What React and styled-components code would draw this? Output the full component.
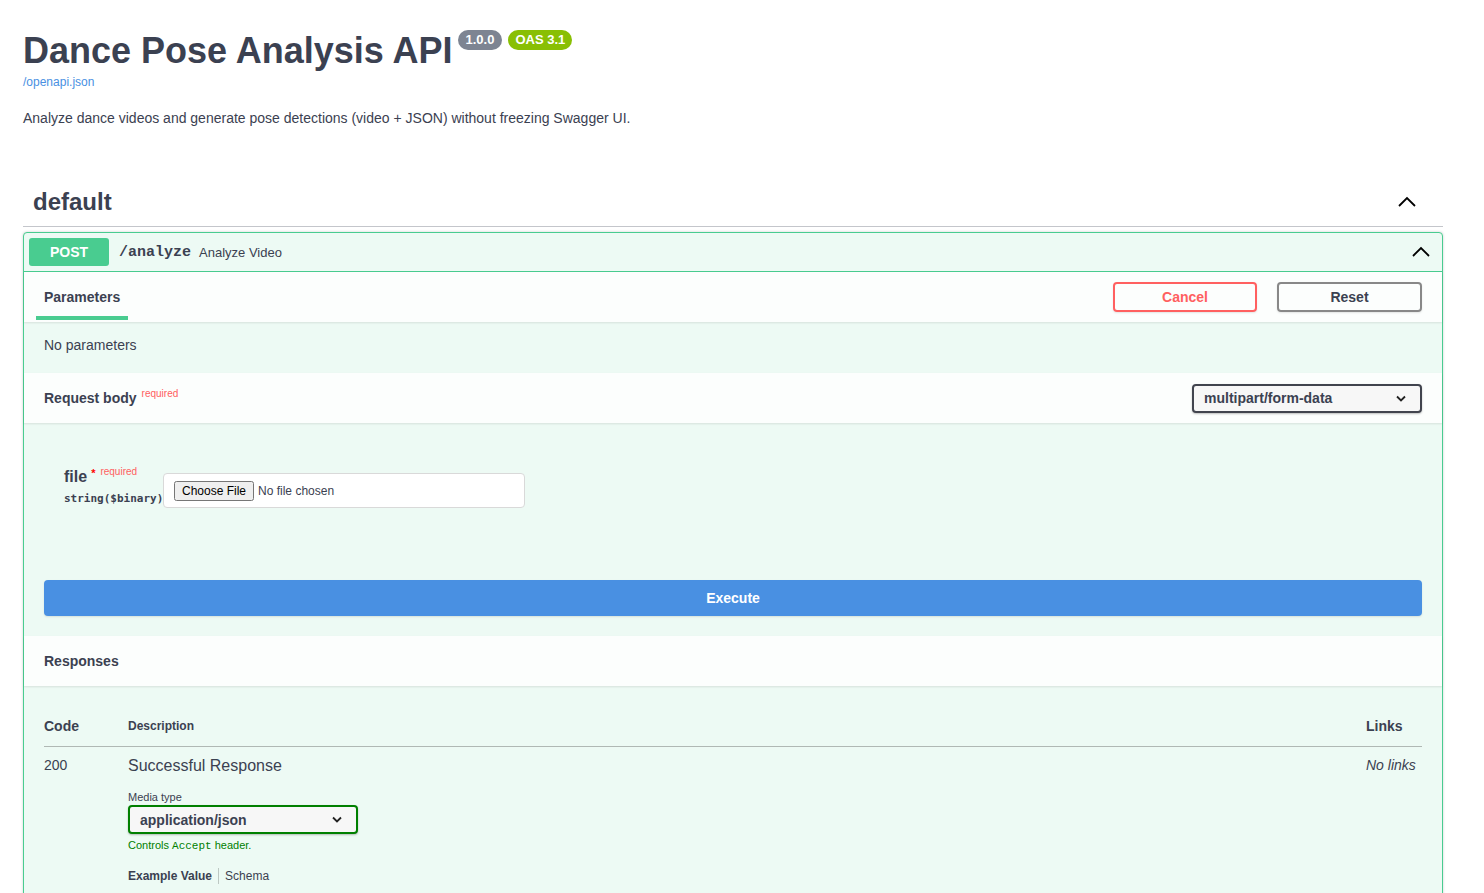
import styled, { createGlobalStyle } from 'styled-components';

const GlobalStyle = createGlobalStyle`
  * { box-sizing: border-box; }
  body {
    margin: 0;
    background: #fff;
    font-family: "Liberation Sans", Arial, sans-serif;
    color: #3b4151;
  }
`;

const Page = styled.div`
  padding: 30px 41px 0 23px;
`;

const Info = styled.div`
  margin-bottom: 50px;
`;

const TitleRow = styled.div`
  display: flex;
  align-items: flex-start;
`;

const Title = styled.h2`
  margin: 0;
  font-size: 36px;
  font-weight: 700;
  line-height: 41px;
  color: #3b4151;
`;

const Tag = styled.span`
  display: inline-block;
  height: 20px;
  line-height: 20px;
  padding: 0 ${({ first }) => (first ? '8px' : '7px')};
  margin: 0 0 0 ${({ first }) => (first ? '5px' : '6px')};
  border-radius: 57px;
  font-size: 13px;
  font-weight: 700;
  color: #fff;
  background: ${({ color }) => color};
`;

const SpecLink = styled.a`
  display: inline-block;
  margin-top: 4px;
  font-size: 12px;
  line-height: 14px;
  color: #4990e2;
  text-decoration: none;
`;

const Description = styled.p`
  margin: 20px 0 0;
  font-size: 14px;
  line-height: 16px;
`;

const TagHeader = styled.div`
  display: flex;
  align-items: center;
  justify-content: space-between;
  height: 51px;
  padding: 2px 27px 0 10px;
  border-bottom: 1px solid #c4c6cb;
`;

const TagName = styled.h3`
  margin: 0;
  font-size: 24px;
  font-weight: 700;
`;

const Opblock = styled.div`
  margin-top: 5px;
  border: 1px solid #49cc90;
  border-radius: 4px 4px 0 0;
  background: #edfaf4;
  box-shadow: 0 0 3px rgba(0, 0, 0, 0.19);
`;

const Summary = styled.div`
  display: flex;
  align-items: center;
  height: 39px;
  padding: 0 12px 0 5px;
  border-bottom: 1px solid #49cc90;
`;

const Method = styled.span`
  width: 80px;
  height: 28px;
  line-height: 28px;
  border-radius: 3px;
  background: #49cc90;
  color: #fff;
  font-size: 14px;
  font-weight: 700;
  text-align: center;
`;

const Path = styled.span`
  margin-left: 10px;
  font-family: "Liberation Mono", "Courier New", monospace;
  font-size: 15px;
  font-weight: 700;
  color: #3b4151;
`;

const SummaryText = styled.span`
  flex: 1;
  margin-left: 8px;
  font-size: 13px;
`;

const SectionHeader = styled.div`
  display: flex;
  align-items: center;
  justify-content: space-between;
  height: 50px;
  padding: 0 20px;
  background: rgba(255, 255, 255, 0.8);
  box-shadow: 0 1px 2px rgba(0, 0, 0, 0.1);
  position: relative;
`;

const TabsHeader = styled(SectionHeader)`
  align-items: flex-start;
  padding-left: 12px;
`;

const TabItem = styled.div`
  display: flex;
  align-items: center;
  height: 48px;
  padding: 6px 8px 0;
  border-bottom: 4px solid #49cc90;
  font-size: 14px;
  font-weight: 700;
`;

const ButtonGroup = styled.div`
  display: flex;
  gap: 20px;
  align-self: center;
`;

const OutlineButton = styled.button`
  width: ${({ w }) => w}px;
  height: 30px;
  border: 2px solid ${({ tone }) => tone};
  border-radius: 4px;
  background: transparent;
  color: ${({ textColor }) => textColor};
  font-family: inherit;
  font-size: 14px;
  font-weight: 700;
  box-shadow: 0 1px 2px rgba(0, 0, 0, 0.1);
`;

const HeaderTitle = styled.h4`
  margin: 0;
  font-size: 14px;
  font-weight: 700;
`;

const Sup = styled.span`
  position: relative;
  top: -6px;
  margin-left: 5px;
  font-size: 10px;
  font-weight: 400;
  color: #ff6060;
`;

const NoParams = styled.div`
  padding: 15px 20px 19px;
  font-size: 14px;
  line-height: 17px;
`;

const Select = styled.div`
  display: flex;
  align-items: center;
  justify-content: space-between;
  width: 230px;
  height: 29px;
  padding: 0 14px 0 10px;
  border: 2px solid ${({ border }) => border};
  border-radius: 4px;
  background: #f7f7f7;
  font-size: 14px;
  font-weight: 700;
  box-shadow: 0 1px 2px rgba(0, 0, 0, 0.25);
`;

const BodyArea = styled.div`
  padding: 44px 20px 20px;
`;

const ParamRow = styled.div`
  display: flex;
  align-items: flex-start;
  padding-left: 20px;
`;

const ParamName = styled.div`
  width: 99px;
`;

const NameLine = styled.div`
  padding-top: 1px;
  font-size: 16px;
  font-weight: 700;
  line-height: 18px;
`;

const Star = styled.span`
  position: relative;
  top: -5px;
  margin-left: 4px;
  font-size: 11px;
  color: red;
`;

const Required = styled.span`
  position: relative;
  top: -7px;
  margin-left: 5px;
  font-size: 10px;
  font-weight: 400;
  color: #ff6060;
`;

const TypeLine = styled.div`
  margin-top: 4px;
  font-family: "DejaVu Sans Mono", monospace;
  font-size: 11px;
  font-weight: 600;
  line-height: 14px;
`;

const FileBox = styled.div`
  display: flex;
  align-items: center;
  width: 362px;
  height: 35px;
  margin-top: 6px;
  padding-left: 10px;
  border: 1px solid #d9d9d9;
  border-radius: 4px;
  background: #fff;

  input {
    font-family: "Liberation Sans", Arial, sans-serif;
    font-size: 12px;
    color: #3b4151;
  }
`;

const ExecuteButton = styled.button`
  display: block;
  width: 100%;
  height: 36px;
  margin-top: 72px;
  border: 0;
  border-radius: 4px;
  background: #4990e2;
  color: #fff;
  font-family: inherit;
  font-size: 14px;
  font-weight: 700;
  box-shadow: 0 1px 2px rgba(0, 0, 0, 0.1);
`;

const ResponsesBody = styled.div`
  padding: 20px 20px 40px;
`;

const ResponseGrid = styled.div`
  display: grid;
  grid-template-columns: 84px 1fr 56px;
`;

const Th = styled.div`
  padding: 12px 0 12px;
  border-bottom: 1px solid #b0b8b4;
  font-size: ${({ small }) => (small ? '12px' : '14px')};
  font-weight: 700;
  line-height: 16px;
`;

const Td = styled.div`
  padding-top: 10px;
  font-size: 14px;
  line-height: 16px;
`;

const ResponseTitle = styled.div`
  font-size: 16px;
  line-height: 18px;
`;

const Muted = styled.div`
  font-style: italic;
`;

const SmallLabel = styled.div`
  margin: 15px 0 1px;
  font-size: 11px;
  line-height: 14px;
`;

const AcceptNote = styled.div`
  margin-top: 4px;
  font-size: 11px;
  line-height: 14px;
  color: #008000;

  code {
    font-family: "Liberation Mono", monospace;
    font-size: 11px;
  }
`;

const ExampleTabs = styled.div`
  display: flex;
  align-items: center;
  margin-top: 15px;
  font-size: 12px;
  line-height: 16px;
`;

const ExampleTab = styled.span`
  font-weight: ${({ active }) => (active ? 700 : 400)};
  padding: 0 6px;
  &:first-child {
    padding-left: 0;
    border-right: 1px solid rgba(0, 0, 0, 0.2);
  }
`;

const ChevronUp = ({ w = 18 }) => (
  <svg width={w} height={12} viewBox="0 0 18 12" fill="none">
    <polyline points="1,10 9,2 17,10" stroke="#000" strokeWidth="1.8" />
  </svg>
);

const ChevronDown = () => (
  <svg width="10" height="7" viewBox="0 0 10 7" fill="none">
    <polyline points="1,1.5 5,5.5 9,1.5" stroke="#222" strokeWidth="1.8" />
  </svg>
);

export default function App() {
  return (
    <Page>
      <GlobalStyle />
      <Info>
        <TitleRow>
          <Title>Dance Pose Analysis API</Title>
          <Tag first color="#7d8492">1.0.0</Tag>
          <Tag color="#89bf04">OAS 3.1</Tag>
        </TitleRow>
        <SpecLink href="#">/openapi.json</SpecLink>
        <Description>
          Analyze dance videos and generate pose detections (video + JSON) without freezing Swagger UI.
        </Description>
      </Info>

      <TagHeader>
        <TagName>default</TagName>
        <ChevronUp />
      </TagHeader>

      <Opblock>
        <Summary>
          <Method>POST</Method>
          <Path>/analyze</Path>
          <SummaryText>Analyze Video</SummaryText>
          <ChevronUp />
        </Summary>

        <TabsHeader>
          <TabItem>Parameters</TabItem>
          <ButtonGroup>
            <OutlineButton w={144} tone="#ff6060" textColor="#ff6060">Cancel</OutlineButton>
            <OutlineButton w={145} tone="#888" textColor="#3b4151">Reset</OutlineButton>
          </ButtonGroup>
        </TabsHeader>
        <NoParams>No parameters</NoParams>

        <SectionHeader>
          <HeaderTitle>
            Request body<Sup>required</Sup>
          </HeaderTitle>
          <Select border="#41444e">
            multipart/form-data
            <ChevronDown />
          </Select>
        </SectionHeader>

        <BodyArea>
          <ParamRow>
            <ParamName>
              <NameLine>
                file<Star>*</Star>
                <Required>required</Required>
              </NameLine>
              <TypeLine>string($binary)</TypeLine>
            </ParamName>
            <FileBox>
              <input type="file" />
            </FileBox>
          </ParamRow>
          <ExecuteButton>Execute</ExecuteButton>
        </BodyArea>

        <SectionHeader>
          <HeaderTitle>Responses</HeaderTitle>
        </SectionHeader>

        <ResponsesBody>
          <ResponseGrid>
            <Th>Code</Th>
            <Th small>Description</Th>
            <Th>Links</Th>
            <Td>200</Td>
            <Td>
              <ResponseTitle>Successful Response</ResponseTitle>
              <SmallLabel>Media type</SmallLabel>
              <Select border="#008000">
                application/json
                <ChevronDown />
              </Select>
              <AcceptNote>
                Controls <code>Accept</code> header.
              </AcceptNote>
              <ExampleTabs>
                <ExampleTab active>Example Value</ExampleTab>
                <ExampleTab>Schema</ExampleTab>
              </ExampleTabs>
            </Td>
            <Td>
              <Muted>No links</Muted>
            </Td>
          </ResponseGrid>
        </ResponsesBody>
      </Opblock>
    </Page>
  );
}
